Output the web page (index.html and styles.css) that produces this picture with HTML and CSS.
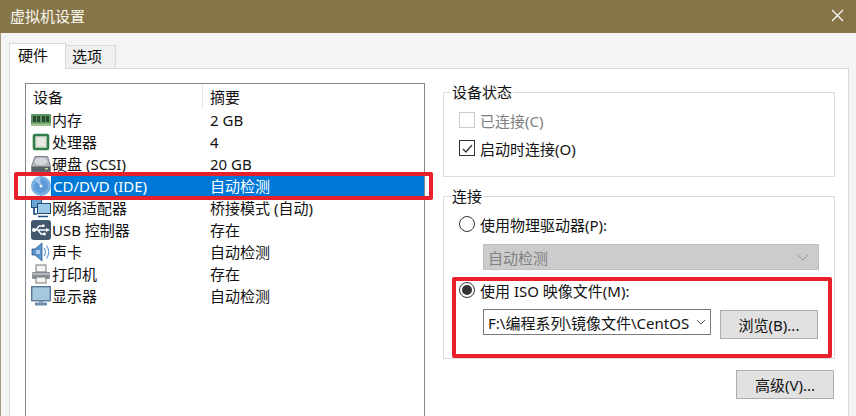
FILE: index.html
```html
<!DOCTYPE html>
<html lang="zh-CN">
<head>
<meta charset="utf-8">
<title>虚拟机设置</title>
<link rel="stylesheet" href="styles.css">
</head>
<body>
<div class="window">
  <header class="titlebar">
    <span class="title">虚拟机设置</span>
    <svg class="close" width="13" height="13" viewBox="0 0 13 13"><path d="M1 1l11 11M12 1L1 12" stroke="#fff" stroke-width="1.2" fill="none"/></svg>
  </header>
  <div class="body">
    <div class="tabs">
      <div class="tab active">硬件</div>
      <div class="tab">选项</div>
    </div>
    <div class="panel">
      <div class="list">
        <div class="list-head">
          <div class="col-a">设备</div>
          <div class="col-b">摘要</div>
        </div>
        <div class="row">
          <div class="col-a"><svg class="ico" viewBox="0 0 20 20"><rect x="0" y="4" width="20" height="12" rx="1" fill="#5c9560"/><rect x="0" y="13.500" width="20" height="2.500" fill="#9dbf92"/><rect x="2" y="6" width="3" height="6" fill="#2a4a30"/><rect x="6" y="6" width="3" height="6" fill="#2a4a30"/><rect x="11" y="6" width="3" height="6" fill="#2a4a30"/><rect x="15" y="6" width="3" height="6" fill="#2a4a30"/></svg><span>内存</span></div>
          <div class="col-b">2 GB</div>
        </div>
        <div class="row">
          <div class="col-a"><svg class="ico" viewBox="0 0 20 20"><rect x="3" y="3" width="14" height="14" rx="1" fill="#d9dfd4" stroke="#2f7d4a" stroke-width="2.600"/><rect x="6" y="6" width="8" height="8" fill="#e8ebe4"/></svg><span>处理器</span></div>
          <div class="col-b">4</div>
        </div>
        <div class="row">
          <div class="col-a"><svg class="ico" viewBox="0 0 20 20"><path d="M4 2.500h12.500l3 10v5H.5v-5z" fill="#b4b9bf" stroke="#7b8187"/><rect x="1" y="12.500" width="18" height="5" fill="#5a5f65"/><ellipse cx="10" cy="7.500" rx="6.500" ry="3.500" fill="#d4d8dc"/><rect x="14" y="14" width="3" height="1.500" fill="#b9d8a0"/></svg><span>硬盘 (SCSI)</span></div>
          <div class="col-b">20 GB</div>
        </div>
        <div class="row selected">
          <div class="col-a"><svg class="ico ico-over" viewBox="0 0 20 20"><circle cx="10" cy="10" r="10" fill="#7aaee0"/><circle cx="10" cy="10" r="7" fill="#5e9ad6"/><path d="M10 10L3 4A9 9 0 0 1 9 1z" fill="#9cc6ec"/><circle cx="10" cy="10" r="1.500" fill="#eaf3fc"/></svg><span class="sel-label">CD/DVD (IDE)</span></div>
          <div class="col-b">自动检测</div>
        </div>
        <div class="row">
          <div class="col-a"><svg class="ico" viewBox="0 0 20 20"><rect x=".5" y="1.500" width="10" height="8" fill="#6aa3d0" stroke="#1f4e7a"/><rect x="6.500" y="5.500" width="13" height="10" fill="#9cc8e8" stroke="#1f4e7a"/><path d="M3 10v6h3M7 18.500h10" stroke="#1f4e7a" stroke-width="1.700" fill="none"/></svg><span>网络适配器</span></div>
          <div class="col-b">桥接模式 (自动)</div>
        </div>
        <div class="row">
          <div class="col-a"><svg class="ico" viewBox="0 0 20 20"><rect x="0" y="0" width="20" height="20" rx="3" fill="#42586f"/><path d="M2 10h14M5 10l3-4h3M7 10l3 4h3" stroke="#fff" stroke-width="1.300" fill="none"/><circle cx="3" cy="10" r="2" fill="#fff"/><path d="M15 8l4 2-4 2z" fill="#fff"/><rect x="11" y="4.500" width="2.500" height="2.500" fill="#fff"/><circle cx="13.500" cy="14" r="1.400" fill="#fff"/></svg><span>USB 控制器</span></div>
          <div class="col-b">存在</div>
        </div>
        <div class="row">
          <div class="col-a"><svg class="ico" viewBox="0 0 20 20"><path d="M1 7h3l7-6v18l-7-6H1z" fill="#5a92cc" stroke="#2e5a8c" stroke-width=".8"/><path d="M5 8h4v4H5z" fill="#a9cdea"/><path d="M13 6q3 4 0 8M15.500 3.500q4.500 6.500 0 13" stroke="#7aa6d2" stroke-width="1.300" fill="none"/></svg><span>声卡</span></div>
          <div class="col-b">自动检测</div>
        </div>
        <div class="row">
          <div class="col-a"><svg class="ico" viewBox="0 0 20 20"><rect x="5" y="1" width="10" height="7" fill="#f4f4f4" stroke="#777"/><rect x="1" y="8" width="18" height="7" rx="1" fill="#8b9096"/><rect x="1.500" y="9" width="17" height="2" fill="#b4b8bd"/><rect x="5" y="13" width="10" height="6" fill="#f4f4f4" stroke="#777"/></svg><span>打印机</span></div>
          <div class="col-b">存在</div>
        </div>
        <div class="row">
          <div class="col-a"><svg class="ico" viewBox="0 0 20 20"><rect x=".7" y=".7" width="18.600" height="14" fill="#a6c8df" stroke="#56789a" stroke-width="1.400"/><path d="M8 14.500h4v2H8z" fill="#7d8fa2"/><rect x="4" y="16.500" width="12" height="3" fill="#6f8eae"/></svg><span>显示器</span></div>
          <div class="col-b">自动检测</div>
        </div>
      </div>
      <div class="side">
        <section class="group group-status">
          <div class="group-title">设备状态</div>
          <label class="check disabled"><span class="box"></span>已连接(C)</label>
          <label class="check"><span class="box"><svg width="13" height="13" viewBox="0 0 13 13"><path d="M2 7l3 3 6-7" stroke="#333" stroke-width="1.300" fill="none"/></svg></span>启动时连接(O)</label>
        </section>
        <section class="group group-conn">
          <div class="group-title">连接</div>
          <label class="check radio-row"><span class="radio"></span>使用物理驱动器(P):</label>
          <div class="select select-off"><span>自动检测</span><svg class="chev" width="12" height="7" viewBox="0 0 12 7"><path d="M1 1l5 5 5-5" stroke="#999" fill="none"/></svg></div>
          <label class="check radio-row iso"><span class="radio on"></span>使用 ISO 映像文件(M):</label>
          <div class="file-row">
            <div class="select select-file"><span>F:\编程系列\镜像文件\CentOS</span><svg class="chev" width="10" height="6" viewBox="0 0 10 6"><path d="M1 1l4 4 4-4" stroke="#555" fill="none"/></svg></div>
            <button class="btn">浏览(B)...</button>
          </div>
        </section>
        <div class="actions"><button class="btn">高级(V)...</button></div>
      </div>
    </div>
  </div>
  <div class="mark mark-row"></div>
  <div class="mark mark-iso"></div>
</div>
</body>
</html>
```
FILE: styles.css
```css
* { box-sizing: border-box; }
html, body { margin: 0; padding: 0; }
body {
  width: 856px;
  height: 416px;
  overflow: hidden;
  background: #f0f0f0;
  font-family: "Noto Sans", "Noto Sans CJK SC", sans-serif;
  font-size: 15px;
  color: #111;
}
.window {
  position: relative;
  width: 856px;
  height: 416px;
  display: flex;
  flex-direction: column;
  overflow: hidden;
}
.titlebar {
  flex: 0 0 33px;
  background: #857549;
  color: #fbf8ee;
  display: flex;
  align-items: center;
  justify-content: space-between;
  padding: 0 12px 0 10px;
}
.title { font-size: 15px; line-height: 33px; }
.close { display: block; margin-bottom: 2px; }
.body {
  flex: 1;
  min-height: 0;
  background: #f4f4f4;
  border-left: 1px solid #a89c78;
  padding: 10px 7px 0 8px;
  display: flex;
  flex-direction: column;
}
.tabs { flex: 0 0 25px; display: flex; align-items: flex-end; }
.tab {
  width: 50px;
  height: 23px;
  line-height: 21px;
  padding-left: 6px;
  background: #f0f0f0;
  border: 1px solid #d9d9d9;
  border-bottom: 0;
  border-left: 0;
}
.tab.active {
  width: 57px;
  height: 26px;
  line-height: 22px;
  padding-left: 8px;
  background: #fff;
  border-left: 1px solid #d9d9d9;
  margin-bottom: -1px;
  position: relative;
}
.panel {
  flex: 1;
  min-height: 0;
  background: #fff;
  border: 1px solid #d9d9d9;
  border-bottom: 0;
  padding: 14px 12px 0 15px;
  display: flex;
  gap: 18px;
}
.list {
  flex: 0 0 400px;
  height: 360px;
  border: 1px solid #828790;
  padding-top: 1px;
}
.list-head, .row { display: flex; height: 22px; line-height: 22px; }
.list-head { height: 24px; line-height: 24px; }
.col-a { flex: 0 0 177px; display: flex; align-items: center; white-space: nowrap; padding-left: 7px; }
.list-head .col-a { border-right: 1px solid #e5e5e5; }
.col-b { flex: 1; padding-left: 7px; white-space: nowrap; }
.row .col-a { padding-left: 5px; gap: 1px; }
.ico { width: 20px; height: 20px; flex: none; display: block; }
.row.selected .col-b { background: #0078d7; color: #fff; }
.sel-label { background: #0078d7; color: #fff; flex: 1; height: 22px; margin-left: -1px; padding-left: 2px; }
.side { flex: 0 0 392px; display: flex; flex-direction: column; padding-top: 9px; }
.group { border: 1px solid #dcdcdc; padding: 0 15px; }
.group-status { height: 85px; }
.group-conn { height: 163px; margin-top: 19px; }
.group-title {
  width: fit-content;
  margin: -12px 0 0 -8px;
  padding: 0 1px;
  height: 22px;
  line-height: 22px;
  background: #fff;
}
.check { display: flex; align-items: center; height: 22px; gap: 5px; }
.group-status .check { margin-top: 6px; }
.box {
  width: 16px;
  height: 16px;
  border: 1px solid #333;
  background: #fff;
  display: flex;
  align-items: center;
  justify-content: center;
}
.disabled { color: #808080; }
.disabled .box { border-color: #cccccc; }
.radio { width: 16px; height: 16px; border: 1px solid #333; border-radius: 50%; background: #fff; display: block; position: relative; }
.radio.on::after { content: ""; position: absolute; left: 2px; top: 2px; width: 10px; height: 10px; border-radius: 50%; background: #333; }
.group-conn .radio-row { margin-top: 6px; }
.group-conn .iso { margin-top: 9px; }
.select { display: flex; align-items: center; justify-content: space-between; height: 26px; white-space: nowrap; }
.select-off { width: 336px; margin: 9px 0 0 24px; background: #cccccc; border: 1px solid #bfbfbf; color: #808080; padding: 0 9px 0 4px; }
.file-row { display: flex; align-items: flex-start; gap: 9px; margin: 8px 0 0 24px; }
.select-file { width: 228px; background: #fff; border: 1px solid #7a7a7a; padding: 0 4px; overflow: hidden; }
.btn {
  width: 98px;
  height: 29px;
  padding: 0;
  background: #e1e1e1;
  border: 1px solid #adadad;
  font: inherit;
  color: #111;
  margin-top: 1px;
}
.actions { display: flex; justify-content: flex-end; margin: 11px 1px 0 0; }
.actions .btn { margin: 0; }
.mark { position: absolute; border: 4px solid #e8202c; border-radius: 2px; }
.mark-row { left: 14px; top: 172px; width: 419px; height: 28px; }
.mark-iso { left: 452px; top: 277px; width: 380px; height: 81px; }
```
